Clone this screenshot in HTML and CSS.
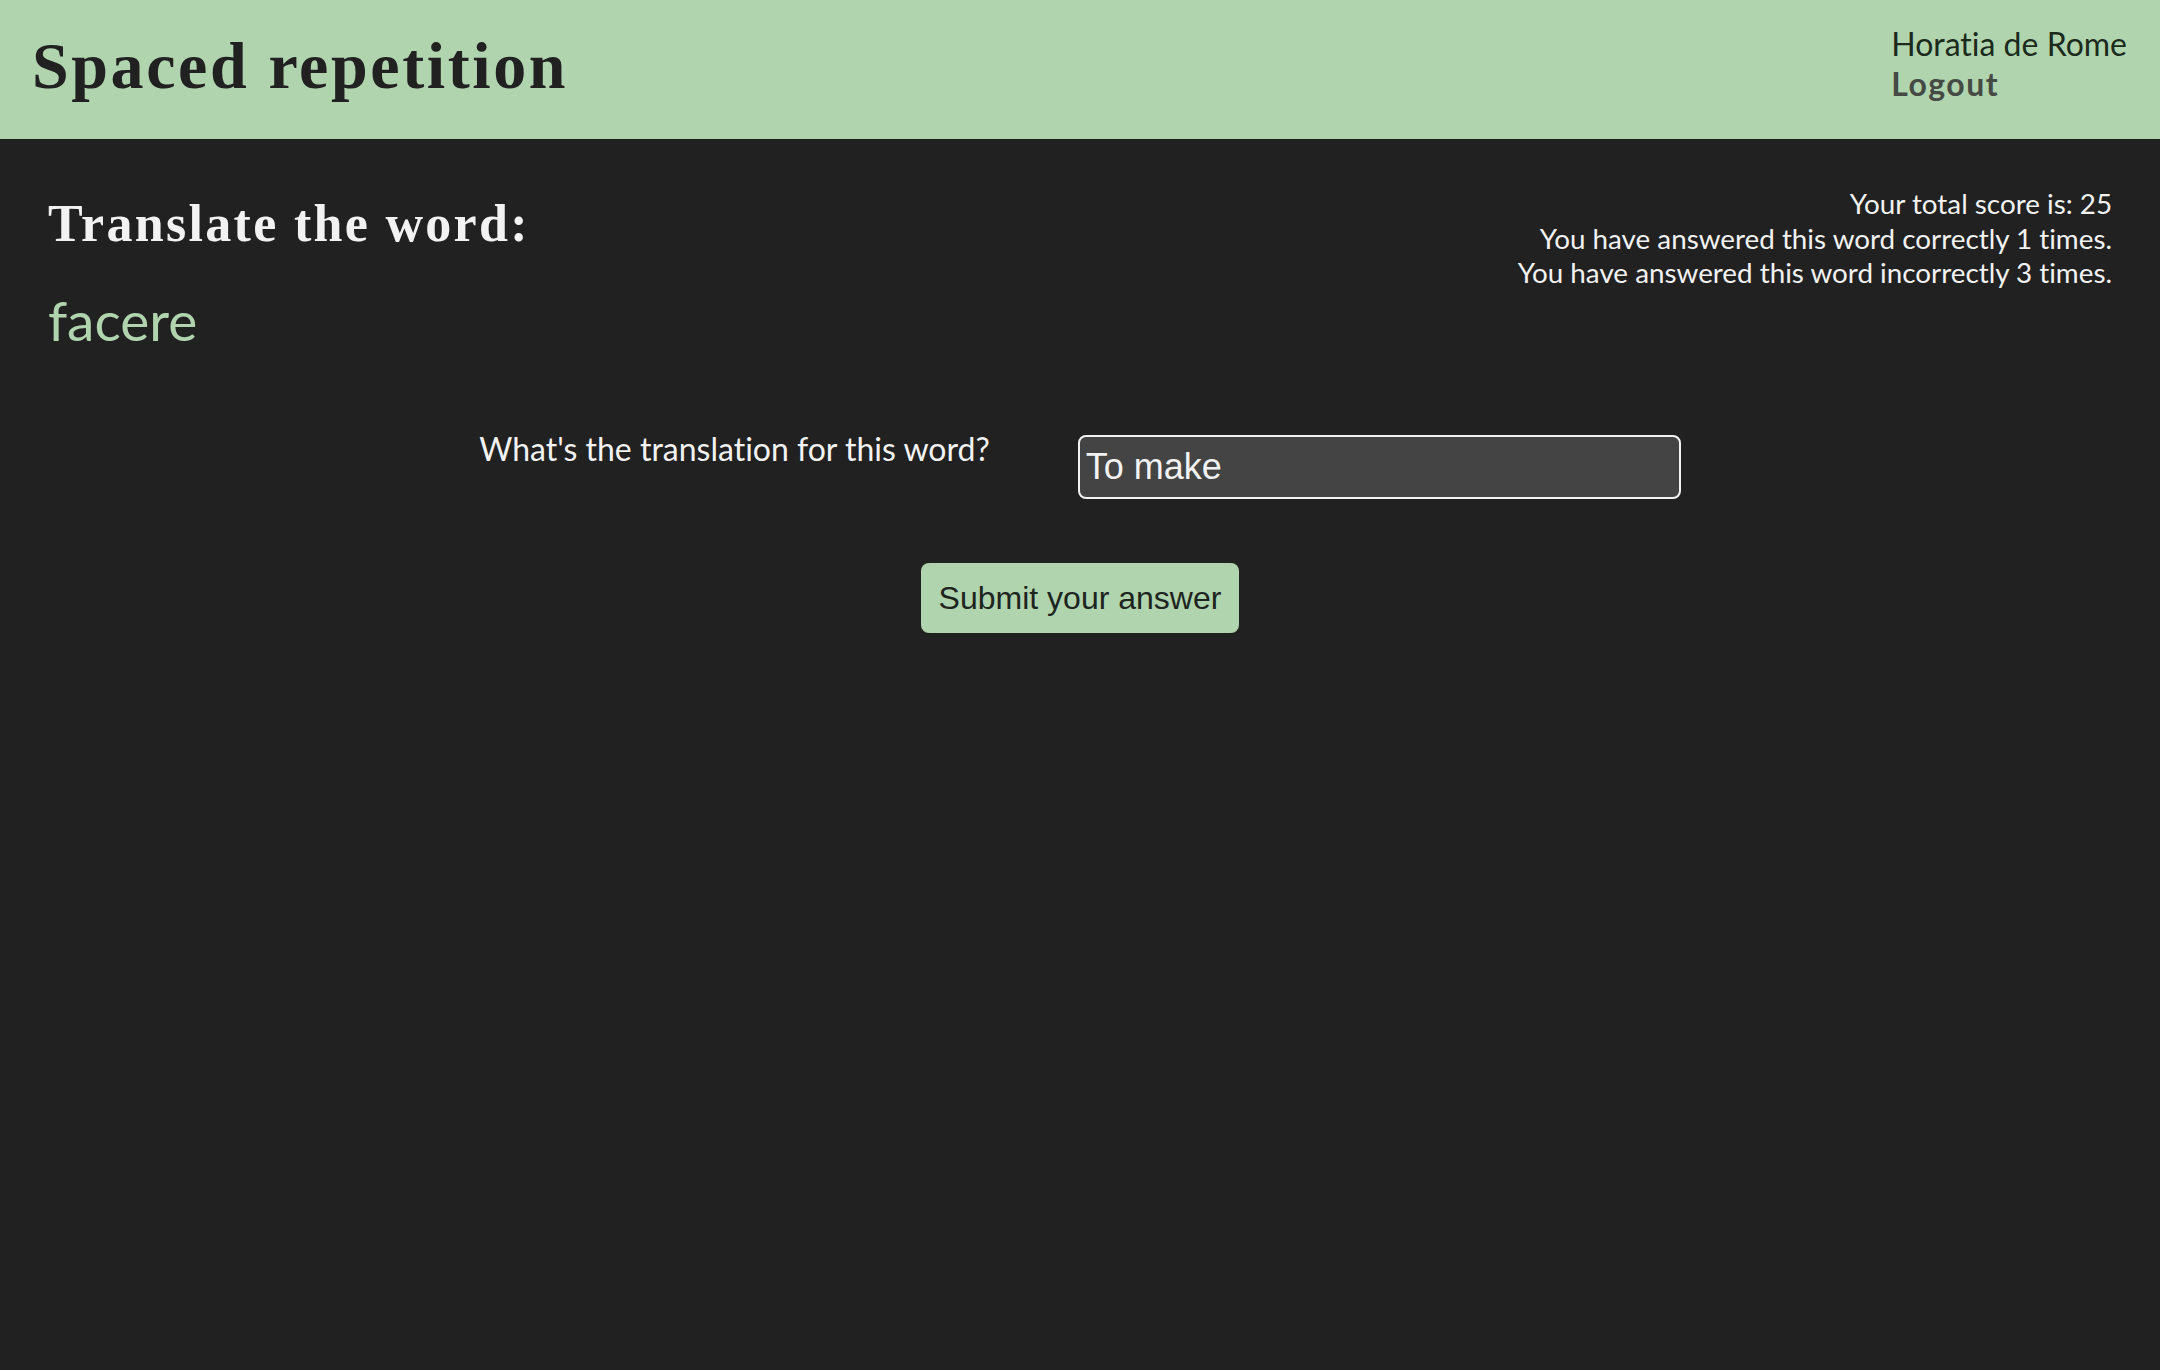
FILE: index.html
```html
<!DOCTYPE html>
<html lang="en">
<head>
<meta charset="utf-8">
<title>Spaced repetition</title>
<link rel="stylesheet" href="styles.css">
</head>
<body>
<header class="topbar">
  <h1 class="brand">Spaced repetition</h1>
  <div class="user">
    <span class="user-name">Horatia de Rome</span>
    <a class="logout" href="#">Logout</a>
  </div>
</header>
<main class="learn">
  <section class="learn-top">
    <div class="word-block">
      <h2 class="prompt">Translate the word:</h2>
      <p class="word">facere</p>
    </div>
    <div class="stats">
      <p>Your total score is: 25</p>
      <p>You have answered this word correctly 1 times.</p>
      <p>You have answered this word incorrectly 3 times.</p>
    </div>
  </section>
  <form class="guess-form">
    <div class="guess-row">
      <label class="guess-label" for="guess">What's the translation for this word?</label>
      <input class="guess-input" id="guess" type="text" value="To make">
    </div>
    <button class="submit" type="submit">Submit your answer</button>
  </form>
</main>
</body>
</html>
```

FILE: styles.css
```css
html, body {
  margin: 0;
  padding: 0;
}
body {
  background: #212121;
  color: #f2f2f2;
  font-family: Lato, "Noto Sans", sans-serif;
  font-variant-ligatures: none;
  min-height: 1370px;
}
.topbar {
  height: 139px;
  box-sizing: border-box;
  background: #b0d4ae;
  display: flex;
  justify-content: space-between;
  align-items: flex-start;
  padding: 0 33px 0 32px;
}
.brand {
  margin: 33px 0 0 0;
  font-family: "Liberation Serif", serif;
  font-weight: bold;
  font-size: 66px;
  letter-spacing: 2.6px;
  line-height: 1;
  color: #212121;
}
.user {
  margin-top: 24px;
  display: flex;
  flex-direction: column;
  font-size: 32px;
  line-height: 40px;
}
.user-name {
  color: #1b2a1b;
}
.logout {
  color: #454a45;
  font-weight: bold;
  letter-spacing: 1.5px;
  text-decoration: none;
}
.learn {
  padding: 46px 48px 0 48px;
}
.learn-top {
  display: flex;
  justify-content: space-between;
  align-items: flex-start;
}
.prompt {
  margin: 0;
  padding-top: 8px;
  font-family: "Liberation Serif", serif;
  font-weight: bold;
  font-size: 52px;
  letter-spacing: 2.3px;
  line-height: 1.2;
  color: #f2f2f2;
}
.word {
  margin: 32px 0 0 0;
  font-size: 55px;
  line-height: 1.2;
  color: #b0d4ae;
}
.stats {
  padding-top: 2px;
  text-align: right;
  font-size: 27.8px;
  line-height: 34.5px;
}
.stats p {
  margin: 0;
}
.guess-form {
  margin-top: 78px;
  display: flex;
  flex-direction: column;
  align-items: center;
}
.guess-row {
  display: flex;
  align-items: flex-start;
  gap: 88px;
}
.guess-label {
  font-size: 32px;
  line-height: 36px;
  color: #f2f2f2;
}
.guess-input {
  margin-top: 4px;
  width: 603px;
  height: 64px;
  box-sizing: border-box;
  border: 2px solid #f2f2f2;
  border-radius: 8px;
  background: #444444;
  color: #f2f2f2;
  font-family: "Liberation Sans", Arial, sans-serif;
  font-size: 36px;
  padding: 0 6px;
  outline: none;
}
.submit {
  margin-top: 64px;
  border: none;
  border-radius: 8px;
  background: #b0d4ae;
  color: #1e241e;
  font-family: "Liberation Sans", Arial, sans-serif;
  font-size: 32px;
  line-height: 38px;
  padding: 16px 18px;
  cursor: pointer;
}
```
